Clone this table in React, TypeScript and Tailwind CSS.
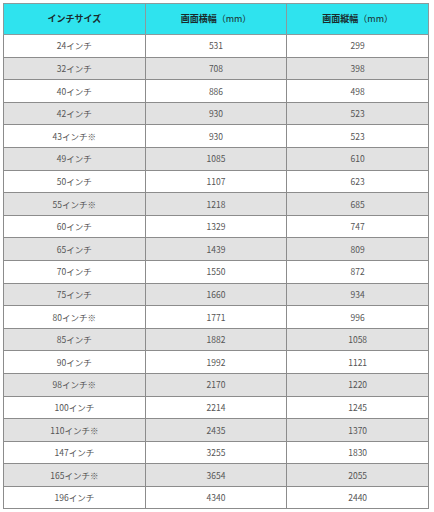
const rows: [string, string, string][] = [
  ["24インチ", "531", "299"],
  ["32インチ", "708", "398"],
  ["40インチ", "886", "498"],
  ["42インチ", "930", "523"],
  ["43インチ※", "930", "523"],
  ["49インチ", "1085", "610"],
  ["50インチ", "1107", "623"],
  ["55インチ※", "1218", "685"],
  ["60インチ", "1329", "747"],
  ["65インチ", "1439", "809"],
  ["70インチ", "1550", "872"],
  ["75インチ", "1660", "934"],
  ["80インチ※", "1771", "996"],
  ["85インチ", "1882", "1058"],
  ["90インチ", "1992", "1121"],
  ["98インチ※", "2170", "1220"],
  ["100インチ", "2214", "1245"],
  ["110インチ※", "2435", "1370"],
  ["147インチ", "3255", "1830"],
  ["165インチ※", "3654", "2055"],
  ["196インチ", "4340", "2440"],
];

export default function App() {
  return (
    <div
      className="h-[512px] w-[434px] bg-white pl-[3px] pt-[3px]"
      style={{ fontFamily: '"Noto Sans CJK JP", "Liberation Sans", sans-serif' }}
    >
      <table className="w-[426px] table-fixed border-collapse text-center">
        <thead>
          <tr className="h-[31px] bg-[#2fe3ee]">
            <th className="border border-[#8a9a9c] text-[9px] font-bold text-[#1a2a2c]">インチサイズ</th>
            <th className="border border-[#8a9a9c] text-[9px] font-bold text-[#1a2a2c]">
              画面横幅<span className="font-normal">（mm）</span>
            </th>
            <th className="border border-[#8a9a9c] text-[9px] font-bold text-[#1a2a2c]">
              画面縦幅<span className="font-normal">（mm）</span>
            </th>
          </tr>
        </thead>
        <tbody>
          {rows.map(([size, w, h], i) => (
            <tr key={size} className={i % 2 === 0 ? "h-[22.6px] bg-white" : "h-[22.6px] bg-[#e2e2e2]"}>
              <td className="border border-[#8c8c8c] p-0 text-[8.5px] text-[#555]">{size}</td>
              <td className="border border-[#8c8c8c] p-0 text-[8.5px] text-[#555]">{w}</td>
              <td className="border border-[#8c8c8c] p-0 text-[8.5px] text-[#555]">{h}</td>
            </tr>
          ))}
        </tbody>
      </table>
    </div>
  );
}
